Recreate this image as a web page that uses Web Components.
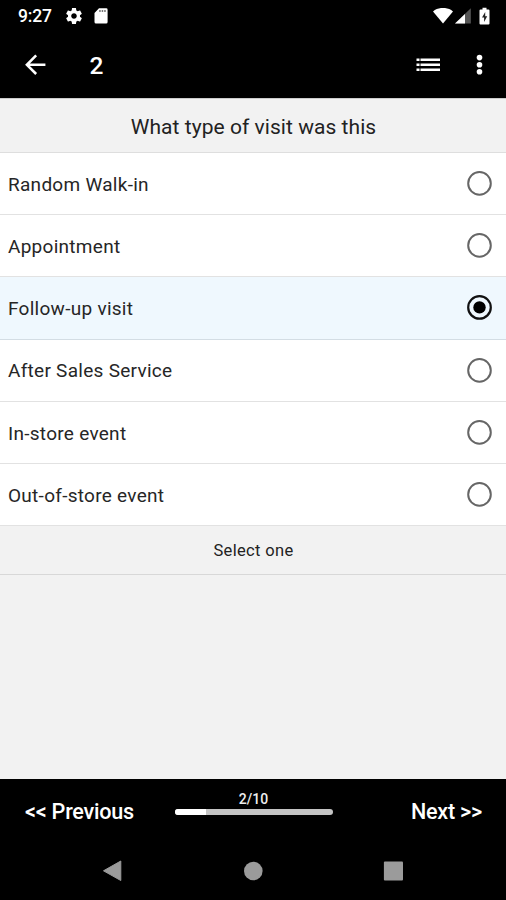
<!DOCTYPE html>
<html lang="en">
<head>
<meta charset="utf-8">
<title>Visit survey</title>
<style>
html,body{margin:0;height:100%;background:#f2f2f2}
body{font-family:Roboto,"Liberation Sans",sans-serif;overflow:hidden}
</style>
</head>
<body>
<survey-screen></survey-screen>
<script>
function define(name, html, setup) {
  const template = document.createElement('template');
  template.innerHTML = html;
  customElements.define(name, class extends HTMLElement {
    connectedCallback() {
      if (this.shadowRoot) return;
      this.attachShadow({ mode: 'open' }).append(template.content.cloneNode(true));
      if (setup) setup(this);
    }
  });
}

define('status-bar', `
<style>
:host{display:flex;height:32px;box-sizing:border-box;padding:0 16px 0 18px;align-items:center;background:#000;color:#fff}
time{width:48px;font-size:17.5px;font-weight:500;line-height:32px;letter-spacing:-.2px}
svg{display:block;flex:none}
.gear{margin-right:12px}
.space{flex:1}
.wifi{margin-right:2px}
.signal{margin-right:8px}
</style>
<time>9:27</time>
<svg class="gear" width="16" height="16" viewBox="2.4 2 19.2 20" fill="#fff"><path d="M19.43 12.98c.04-.32.07-.64.07-.98s-.03-.66-.07-.98l2.11-1.65c.19-.15.24-.42.12-.64l-2-3.46c-.12-.22-.39-.3-.61-.22l-2.49 1c-.52-.4-1.08-.73-1.69-.98l-.38-2.65C14.46 2.18 14.25 2 14 2h-4c-.25 0-.46.18-.49.42l-.38 2.65c-.61.25-1.17.59-1.69.98l-2.49-1c-.23-.09-.49 0-.61.22l-2 3.46c-.13.22-.07.49.12.64l2.11 1.65c-.04.32-.07.65-.07.98s.03.66.07.98l-2.11 1.65c-.19.15-.24.42-.12.64l2 3.46c.12.22.39.3.61.22l2.49-1c.52.4 1.08.73 1.69.98l.38 2.65c.03.24.24.42.49.42h4c.25 0 .46-.18.49-.42l.38-2.65c.61-.25 1.17-.59 1.69-.98l2.49 1c.23.09.49 0 .61-.22l2-3.46c.12-.22.07-.49-.12-.64l-2.11-1.65zM12 15.5c-1.93 0-3.5-1.57-3.5-3.5s1.57-3.5 3.5-3.5 3.5 1.57 3.5 3.5-1.57 3.5-3.5 3.5z"/></svg>
<svg width="14" height="16" viewBox="0 0 14 16"><path d="M5 .3h7.2a1.4 1.4 0 0 1 1.4 1.4v12.4a1.5 1.5 0 0 1-1.5 1.5H2A1.5 1.5 0 0 1 .5 14.1V5z" fill="#fff"/><path d="M5.2 2.1h1.5v2H5.2zM7.7 2.1h1.5v2H7.7zM10.2 2.1h1.5v2h-1.5z" fill="#777"/></svg>
<span class="space"></span>
<svg class="wifi" width="20" height="16" viewBox="0 0 20 16"><path d="M0 3.400C5.600-1.300 14.400-1.300 20 3.400L10 15.600z" fill="#fff"/></svg>
<svg class="signal" width="16" height="16" viewBox="0 0 16 16"><path d="M15.800.2v15.300H0z" fill="#555"/><path d="M10 5.900v9.600H0z" fill="#fff"/></svg>
<svg width="11" height="18" viewBox="0 0 11 18"><path d="M3.500.7h4v1.700h2a1 1 0 0 1 1 1v13a1 1 0 0 1-1 1h-8a1 1 0 0 1-1-1v-13a1 1 0 0 1 1-1h2z" fill="#fff"/><path d="M6.200 5 3 10.500h2.100V15L8.200 9.300H6.200z" fill="#222"/></svg>`);

define('app-bar', `
<style>
:host{display:flex;height:66px;box-sizing:border-box;padding:0 11px 0 20px;align-items:center;background:#000;color:#fff}
svg{display:block;flex:none}
h1{margin:0 0 0 39px;flex:1;font-size:24.500px;font-weight:500;line-height:66px;padding-top:1px}
.list{margin-right:24px}
</style>
<svg width="30.500" height="30.500" viewBox="0 .4 24 24" fill="#fff"><path d="M20 11H7.830l5.590-5.590L12 4l-8 8 8 8 1.410-1.410L7.830 13H20v-2z"/></svg>
<h1><slot></slot></h1>
<svg class="list" width="24" height="14" viewBox="0 0 24 14"><path d="M.5.500h2.500v2.600H.5zM5 .500h19v2.600H5zM.5 5.500h2.500v2.600H.5zM5 5.500h19v2.600H5zM.5 10.400h2.500V13H.5zM5 10.400h19V13H5z" fill="#fff"/><path d="M3 .500h2v2.600H3zM3 5.500h2v2.600H3zM3 10.400h2V13H3z" fill="#888"/></svg>
<svg width="31" height="22" viewBox="0 0 31 22" fill="#fff"><circle cx="15.500" cy="3.600" r="2.800"/><circle cx="15.500" cy="10.700" r="2.800"/><circle cx="15.500" cy="17.800" r="2.800"/></svg>`);

define('question-title', `
<style>
:host{display:flex;height:55px;box-sizing:border-box;border-top:1px solid #ccc;border-bottom:1.500px solid #dedede;justify-content:center;align-items:center;color:#222;font-size:21px;letter-spacing:.05px;padding:2px 0 0 1px}
</style><span><slot></slot></span>`);

define('radio-option', `
<style>
:host{display:flex;height:62.200px;box-sizing:border-box;padding:0 13px 0 8px;align-items:center;justify-content:space-between;background:#fff;border-bottom:1px solid #e2e2e2;color:#262626;font-size:19px;letter-spacing:.28px}
:host([checked]){background:#eff8fe;border-color:#d3dde4}
span{padding-top:1.500px}
svg{display:block;flex:none}
.dot{display:none}
circle{stroke:#666;stroke-width:2}
:host([checked]) circle{stroke:#111;stroke-width:2.200}
:host([checked]) .dot{display:block;stroke:none}
</style>
<span><slot></slot></span>
<svg width="27" height="27" viewBox="0 0 27 27"><circle cx="13.500" cy="13.400" r="11.300" fill="none"/><circle class="dot" cx="13.500" cy="13.400" r="6.200" fill="#000"/></svg>`);

define('selection-hint', `
<style>
:host{display:flex;height:49px;box-sizing:border-box;justify-content:center;align-items:center;border-bottom:1px solid #d8d8d8;color:#222;font-size:16.500px;letter-spacing:.35px;padding:1px 0 0 1px}
</style><span><slot></slot></span>`);

define('survey-progress', `
<style>
:host{display:flex;flex-direction:column;align-items:center;width:158px;color:#eee;font-size:14px;font-weight:500;line-height:16px;padding-top:12px}
.track{width:158px;height:5.500px;margin-top:2px;border-radius:3px;background:#c4c4c4;overflow:hidden}
.bar{height:100%;background:#fff}
</style><span class="label"></span><div class="track"><div class="bar"></div></div>`, host => {
  const value = +host.getAttribute('value'), max = +host.getAttribute('max');
  host.shadowRoot.querySelector('.label').textContent = value + '/' + max;
  host.shadowRoot.querySelector('.bar').style.width = value / max * 100 + '%';
});

define('pager-bar', `
<style>
:host{display:grid;grid-template-columns:1fr 158px 1fr;height:63px;box-sizing:border-box;padding:0 24px 0 25px;background:#000;color:#fff;font-size:21.600px;font-weight:500;letter-spacing:-.24px;line-height:66px}
::slotted(*){letter-spacing:0}
.next{text-align:right}
</style><span class="prev">&lt;&lt; Previous</span><slot></slot><span class="next">Next &gt;&gt;</span>`);

define('system-nav', `
<style>
:host{display:flex;height:58px;background:#000;justify-content:center;gap:120px;align-items:center}
svg{display:block}
</style>
<svg width="20" height="22" viewBox="0 0 20 22"><path d="M17.800 1v19.500L.5 10.800z" fill="#9b9b9b" stroke="#9b9b9b" stroke-linejoin="round"/></svg>
<svg width="20" height="22" viewBox="0 0 20 22"><circle cx="10.300" cy="11" r="9.300" fill="#9b9b9b"/></svg>
<svg width="20" height="22" viewBox="0 0 20 22"><rect x=".9" y="1.500" width="19.100" height="19.100" rx="1" fill="#9b9b9b"/></svg>`);

define('survey-screen', `
<style>
:host{display:flex;flex-direction:column;width:506px;height:900px;background:#f2f2f2}
main{flex:1;min-height:0}
status-bar,app-bar,pager-bar,system-nav{flex:none}
</style>
<status-bar></status-bar>
<app-bar>2</app-bar>
<main>
<question-title>What type of visit was this</question-title>
<radio-option>Random Walk-in</radio-option>
<radio-option>Appointment</radio-option>
<radio-option checked>Follow-up visit</radio-option>
<radio-option>After Sales Service</radio-option>
<radio-option>In-store event</radio-option>
<radio-option>Out-of-store event</radio-option>
<selection-hint>Select one</selection-hint>
</main>
<pager-bar><survey-progress value="2" max="10"></survey-progress></pager-bar>
<system-nav></system-nav>`);
</script>
</body>
</html>
